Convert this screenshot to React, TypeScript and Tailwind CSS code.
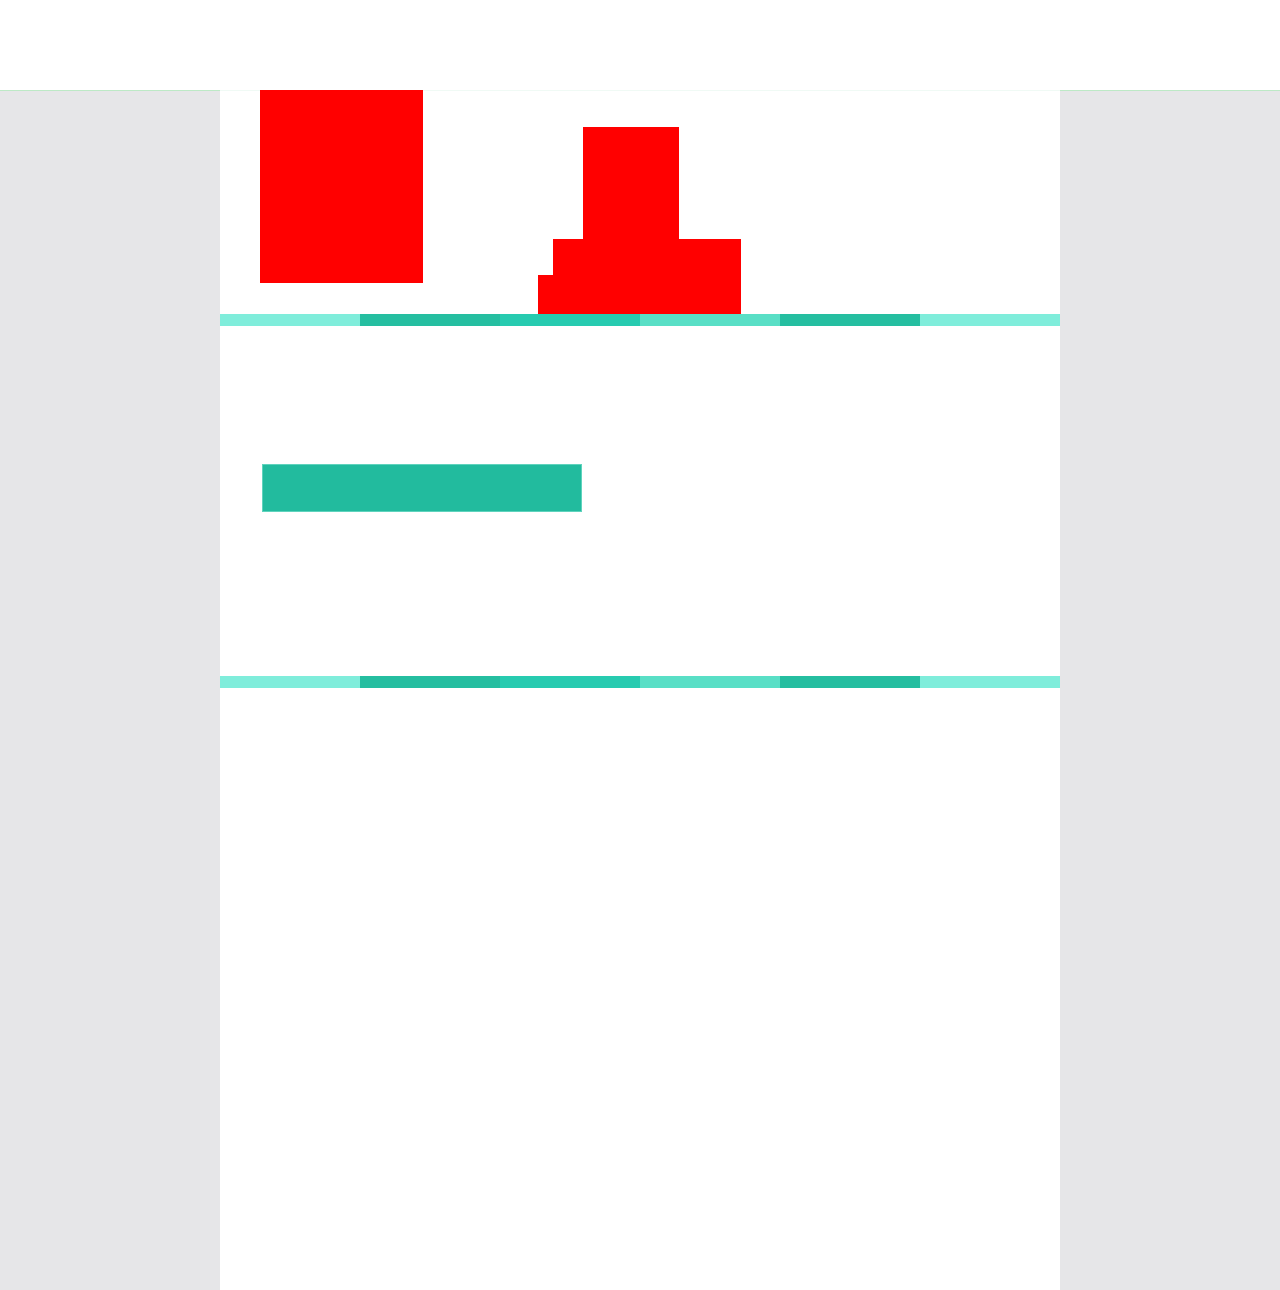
const stripe = ["bg-[#7feddb]", "bg-[#25bea0]", "bg-[#27cbb0]", "bg-[#59dfc6]", "bg-[#25bea0]", "bg-[#7feddb]"];

const Stripe = () => (
  <div className="flex h-3 w-full">
    {stripe.map((c, i) => (
      <div key={i} className={`h-full flex-1 ${c}`} />
    ))}
  </div>
);

const HeroFigure = () => (
  <svg width="204" height="188" viewBox="0 0 204 188" className="block">
    <rect x="45" y="0" width="96" height="114" fill="#ff0000" />
    <rect x="15" y="112" width="188" height="76" fill="#ff0000" />
    <rect x="0" y="148" width="203" height="40" fill="#ff0000" />
  </svg>
);

export default function App() {
  return (
    <div className="min-h-[1290px] bg-[#e6e6e8] font-['Liberation_Sans',sans-serif]">
      <header className="h-[91px] border-b border-[#bde9c6] bg-white" />
      <main className="-mt-px mx-auto flex min-h-[1200px] w-[840px] flex-col border-t border-[#f0faf5] bg-white">
        <section className="flex h-[223px] items-start">
          <div className="-mt-px ml-10 h-[193px] w-[163px] bg-[#ff0000]" />
          <div className="ml-[115px] mt-[36px]">
            <HeroFigure />
          </div>
        </section>
        <Stripe />
        <section className="h-[350px] pl-[42px] pt-[138px]">
          <button className="h-12 w-80 border border-[#5fd3bd] bg-[#22bb9e]" aria-label="action" />
        </section>
        <Stripe />
        <div className="flex-1" />
      </main>
    </div>
  );
}
